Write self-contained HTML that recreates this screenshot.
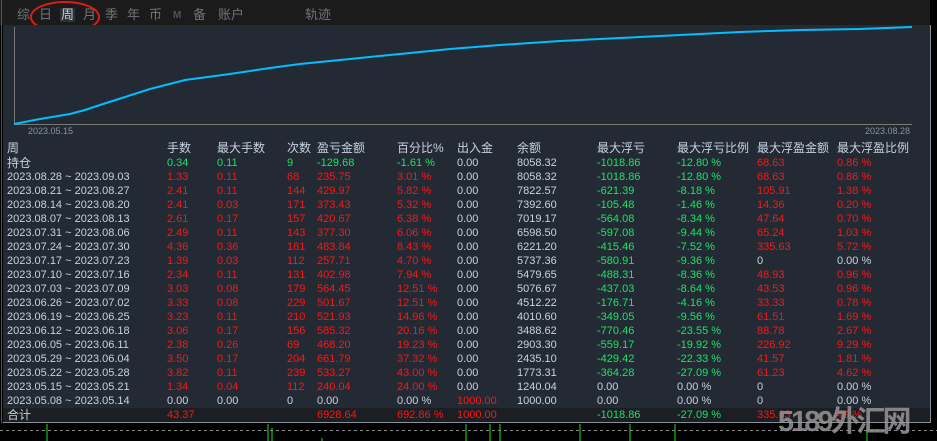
<!DOCTYPE html>
<html><head><meta charset="utf-8"><style>
*{margin:0;padding:0;box-sizing:border-box}
body{width:937px;height:441px;background:#000;position:relative;overflow:hidden;font-family:"Liberation Sans","Noto Sans CJK SC",sans-serif}
#top{position:absolute;left:0;top:0;width:930px;height:25px;background:#1b1b1b}
.tab{position:absolute;top:8px;font-size:13px;color:#6f747a;line-height:14px}
#panel{position:absolute;left:3px;top:25px;width:928px;height:398px;background:#232a33;border-right:1px solid #8a9099;border-bottom:1px solid #8a9099}
#lb{position:absolute;left:1px;top:0;width:1px;height:423px;background:#555}
.r{position:absolute;left:0;width:925px;height:14px;font-size:11px;line-height:14px;color:#c9d2e2}
.r span{position:absolute;top:0;white-space:nowrap}
.h{font-size:12px}
.R{color:#ff1515}.G{color:#14e865}
</style></head><body>
<div id="top">
<span class="tab" style="left:17px">综</span>
<span class="tab" style="left:39px">日</span>
<span class="tab" style="left:60px;background:#2a3038;color:#c8ccd2;padding:0 1px">周</span>
<span class="tab" style="left:83px">月</span>
<span class="tab" style="left:105px">季</span>
<span class="tab" style="left:127px">年</span>
<span class="tab" style="left:149px">币</span>
<span class="tab" style="left:173px;font-size:10px;font-weight:bold;top:9px;color:#4a5560">M</span>
<span class="tab" style="left:193px">备</span>
<span class="tab" style="left:218px">账户</span>
<span class="tab" style="left:305px">轨迹</span>
<svg style="position:absolute;left:30px;top:1px" width="74" height="33"><ellipse cx="35" cy="16" rx="34" ry="15" fill="none" stroke="#e01a1a" stroke-width="2"/></svg>
</div>
<div id="panel"></div>
<div id="lb"></div>
<svg style="position:absolute;left:0;top:0" width="937" height="441">
<line x1="14.5" y1="27" x2="14.5" y2="124" stroke="#777" />
<line x1="14" y1="124.5" x2="912" y2="124.5" stroke="#777"/>
<polyline fill="none" stroke="#00bfff" stroke-width="2" points="14,124 40,119 70,114 85,110 100,105 125,97 150,89 185,80 230,74 270,68 300,64 350,59 400,54 450,49 500,45 560,41 620,38 680,35 740,32 800,30 860,29 912,27"/>
<text x="28" y="134" font-size="9" fill="#8a929c" font-family="Liberation Sans">2023.05.15</text>
<text x="865" y="134" font-size="9" fill="#8a929c" font-family="Liberation Sans">2023.08.28</text>
<line x1="0" y1="430.5" x2="937" y2="430.5" stroke="#888" stroke-dasharray="3,3"/>
<g stroke="#22dd22"><line x1="47" y1="424" x2="47" y2="441"/><line x1="268" y1="424" x2="268" y2="441"/><line x1="272" y1="428" x2="272" y2="441"/><line x1="322" y1="438" x2="322" y2="441"/><line x1="466" y1="424" x2="466" y2="441"/><line x1="490" y1="424" x2="490" y2="441"/><line x1="500" y1="424" x2="500" y2="441"/><line x1="580" y1="424" x2="580" y2="441"/><line x1="630" y1="424" x2="630" y2="441"/><line x1="675" y1="424" x2="675" y2="441"/><line x1="867" y1="424" x2="867" y2="441"/></g>
<rect x="3" y="408" width="927" height="14" fill="#1b1e22"/>
</svg>

<div class="r h" style="top:141px"><span style="left:7px">周</span><span style="left:167px">手数</span><span style="left:217px">最大手数</span><span style="left:287px">次数</span><span style="left:317px">盈亏金额</span><span style="left:397px">百分比%</span><span style="left:457px">出入金</span><span style="left:517px">余额</span><span style="left:597px">最大浮亏</span><span style="left:677px">最大浮亏比例</span><span style="left:757px">最大浮盈金额</span><span style="left:837px">最大浮盈比例</span></div>
<div class="r" style="top:156px"><span class="h" style="left:7px">持仓</span><span class="G" style="left:167px">0.34</span><span class="G" style="left:217px">0.11</span><span class="G" style="left:287px">9</span><span class="G" style="left:317px">-129.68</span><span class="G" style="left:397px">-1.61 %</span><span style="left:457px">0.00</span><span style="left:517px">8058.32</span><span class="G" style="left:597px">-1018.86</span><span class="G" style="left:677px">-12.80 %</span><span class="R" style="left:757px">68.63</span><span class="R" style="left:837px">0.86 %</span></div>
<div class="r" style="top:170px"><span style="left:7px">2023.08.28 ~ 2023.09.03</span><span class="R" style="left:167px">1.33</span><span class="R" style="left:217px">0.11</span><span class="R" style="left:287px">68</span><span class="R" style="left:317px">235.75</span><span class="R" style="left:397px">3.01 %</span><span style="left:457px">0.00</span><span style="left:517px">8058.32</span><span class="G" style="left:597px">-1018.86</span><span class="G" style="left:677px">-12.80 %</span><span class="R" style="left:757px">68.63</span><span class="R" style="left:837px">0.86 %</span></div>
<div class="r" style="top:184px"><span style="left:7px">2023.08.21 ~ 2023.08.27</span><span class="R" style="left:167px">2.41</span><span class="R" style="left:217px">0.11</span><span class="R" style="left:287px">144</span><span class="R" style="left:317px">429.97</span><span class="R" style="left:397px">5.82 %</span><span style="left:457px">0.00</span><span style="left:517px">7822.57</span><span class="G" style="left:597px">-621.39</span><span class="G" style="left:677px">-8.18 %</span><span class="R" style="left:757px">105.91</span><span class="R" style="left:837px">1.38 %</span></div>
<div class="r" style="top:198px"><span style="left:7px">2023.08.14 ~ 2023.08.20</span><span class="R" style="left:167px">2.41</span><span class="R" style="left:217px">0.03</span><span class="R" style="left:287px">171</span><span class="R" style="left:317px">373.43</span><span class="R" style="left:397px">5.32 %</span><span style="left:457px">0.00</span><span style="left:517px">7392.60</span><span class="G" style="left:597px">-105.48</span><span class="G" style="left:677px">-1.46 %</span><span class="R" style="left:757px">14.36</span><span class="R" style="left:837px">0.20 %</span></div>
<div class="r" style="top:212px"><span style="left:7px">2023.08.07 ~ 2023.08.13</span><span class="R" style="left:167px">2.61</span><span class="R" style="left:217px">0.17</span><span class="R" style="left:287px">157</span><span class="R" style="left:317px">420.67</span><span class="R" style="left:397px">6.38 %</span><span style="left:457px">0.00</span><span style="left:517px">7019.17</span><span class="G" style="left:597px">-564.08</span><span class="G" style="left:677px">-8.34 %</span><span class="R" style="left:757px">47.64</span><span class="R" style="left:837px">0.70 %</span></div>
<div class="r" style="top:226px"><span style="left:7px">2023.07.31 ~ 2023.08.06</span><span class="R" style="left:167px">2.49</span><span class="R" style="left:217px">0.11</span><span class="R" style="left:287px">143</span><span class="R" style="left:317px">377.30</span><span class="R" style="left:397px">6.06 %</span><span style="left:457px">0.00</span><span style="left:517px">6598.50</span><span class="G" style="left:597px">-597.08</span><span class="G" style="left:677px">-9.44 %</span><span class="R" style="left:757px">65.24</span><span class="R" style="left:837px">1.03 %</span></div>
<div class="r" style="top:240px"><span style="left:7px">2023.07.24 ~ 2023.07.30</span><span class="R" style="left:167px">4.36</span><span class="R" style="left:217px">0.36</span><span class="R" style="left:287px">181</span><span class="R" style="left:317px">483.84</span><span class="R" style="left:397px">8.43 %</span><span style="left:457px">0.00</span><span style="left:517px">6221.20</span><span class="G" style="left:597px">-415.46</span><span class="G" style="left:677px">-7.52 %</span><span class="R" style="left:757px">335.63</span><span class="R" style="left:837px">5.72 %</span></div>
<div class="r" style="top:254px"><span style="left:7px">2023.07.17 ~ 2023.07.23</span><span class="R" style="left:167px">1.39</span><span class="R" style="left:217px">0.03</span><span class="R" style="left:287px">112</span><span class="R" style="left:317px">257.71</span><span class="R" style="left:397px">4.70 %</span><span style="left:457px">0.00</span><span style="left:517px">5737.36</span><span class="G" style="left:597px">-580.91</span><span class="G" style="left:677px">-9.36 %</span><span style="left:757px">0</span><span style="left:837px">0.00 %</span></div>
<div class="r" style="top:268px"><span style="left:7px">2023.07.10 ~ 2023.07.16</span><span class="R" style="left:167px">2.34</span><span class="R" style="left:217px">0.11</span><span class="R" style="left:287px">131</span><span class="R" style="left:317px">402.98</span><span class="R" style="left:397px">7.94 %</span><span style="left:457px">0.00</span><span style="left:517px">5479.65</span><span class="G" style="left:597px">-488.31</span><span class="G" style="left:677px">-8.36 %</span><span class="R" style="left:757px">48.93</span><span class="R" style="left:837px">0.96 %</span></div>
<div class="r" style="top:282px"><span style="left:7px">2023.07.03 ~ 2023.07.09</span><span class="R" style="left:167px">3.03</span><span class="R" style="left:217px">0.08</span><span class="R" style="left:287px">179</span><span class="R" style="left:317px">564.45</span><span class="R" style="left:397px">12.51 %</span><span style="left:457px">0.00</span><span style="left:517px">5076.67</span><span class="G" style="left:597px">-437.03</span><span class="G" style="left:677px">-8.64 %</span><span class="R" style="left:757px">43.53</span><span class="R" style="left:837px">0.96 %</span></div>
<div class="r" style="top:296px"><span style="left:7px">2023.06.26 ~ 2023.07.02</span><span class="R" style="left:167px">3.33</span><span class="R" style="left:217px">0.08</span><span class="R" style="left:287px">229</span><span class="R" style="left:317px">501.67</span><span class="R" style="left:397px">12.51 %</span><span style="left:457px">0.00</span><span style="left:517px">4512.22</span><span class="G" style="left:597px">-176.71</span><span class="G" style="left:677px">-4.16 %</span><span class="R" style="left:757px">33.33</span><span class="R" style="left:837px">0.78 %</span></div>
<div class="r" style="top:310px"><span style="left:7px">2023.06.19 ~ 2023.06.25</span><span class="R" style="left:167px">3.23</span><span class="R" style="left:217px">0.11</span><span class="R" style="left:287px">210</span><span class="R" style="left:317px">521.93</span><span class="R" style="left:397px">14.96 %</span><span style="left:457px">0.00</span><span style="left:517px">4010.60</span><span class="G" style="left:597px">-349.05</span><span class="G" style="left:677px">-9.56 %</span><span class="R" style="left:757px">61.51</span><span class="R" style="left:837px">1.69 %</span></div>
<div class="r" style="top:324px"><span style="left:7px">2023.06.12 ~ 2023.06.18</span><span class="R" style="left:167px">3.06</span><span class="R" style="left:217px">0.17</span><span class="R" style="left:287px">156</span><span class="R" style="left:317px">585.32</span><span class="R" style="left:397px">20.16 %</span><span style="left:457px">0.00</span><span style="left:517px">3488.62</span><span class="G" style="left:597px">-770.46</span><span class="G" style="left:677px">-23.55 %</span><span class="R" style="left:757px">88.78</span><span class="R" style="left:837px">2.67 %</span></div>
<div class="r" style="top:338px"><span style="left:7px">2023.06.05 ~ 2023.06.11</span><span class="R" style="left:167px">2.38</span><span class="R" style="left:217px">0.26</span><span class="R" style="left:287px">69</span><span class="R" style="left:317px">468.20</span><span class="R" style="left:397px">19.23 %</span><span style="left:457px">0.00</span><span style="left:517px">2903.30</span><span class="G" style="left:597px">-559.17</span><span class="G" style="left:677px">-19.92 %</span><span class="R" style="left:757px">226.92</span><span class="R" style="left:837px">9.29 %</span></div>
<div class="r" style="top:352px"><span style="left:7px">2023.05.29 ~ 2023.06.04</span><span class="R" style="left:167px">3.50</span><span class="R" style="left:217px">0.17</span><span class="R" style="left:287px">204</span><span class="R" style="left:317px">661.79</span><span class="R" style="left:397px">37.32 %</span><span style="left:457px">0.00</span><span style="left:517px">2435.10</span><span class="G" style="left:597px">-429.42</span><span class="G" style="left:677px">-22.33 %</span><span class="R" style="left:757px">41.57</span><span class="R" style="left:837px">1.81 %</span></div>
<div class="r" style="top:366px"><span style="left:7px">2023.05.22 ~ 2023.05.28</span><span class="R" style="left:167px">3.82</span><span class="R" style="left:217px">0.11</span><span class="R" style="left:287px">239</span><span class="R" style="left:317px">533.27</span><span class="R" style="left:397px">43.00 %</span><span style="left:457px">0.00</span><span style="left:517px">1773.31</span><span class="G" style="left:597px">-364.28</span><span class="G" style="left:677px">-27.09 %</span><span class="R" style="left:757px">61.23</span><span class="R" style="left:837px">4.62 %</span></div>
<div class="r" style="top:380px"><span style="left:7px">2023.05.15 ~ 2023.05.21</span><span class="R" style="left:167px">1.34</span><span class="R" style="left:217px">0.04</span><span class="R" style="left:287px">112</span><span class="R" style="left:317px">240.04</span><span class="R" style="left:397px">24.00 %</span><span style="left:457px">0.00</span><span style="left:517px">1240.04</span><span style="left:597px">0.00</span><span style="left:677px">0.00 %</span><span style="left:757px">0</span><span style="left:837px">0.00 %</span></div>
<div class="r" style="top:394px"><span style="left:7px">2023.05.08 ~ 2023.05.14</span><span style="left:167px">0.00</span><span style="left:217px">0.00</span><span style="left:287px">0</span><span style="left:317px">0.00</span><span style="left:397px">0.00 %</span><span class="R" style="left:457px">1000.00</span><span style="left:517px">1000.00</span><span style="left:597px">0.00</span><span style="left:677px">0.00 %</span><span style="left:757px">0</span><span style="left:837px">0.00 %</span></div>
<div class="r" style="top:408px"><span class="h" style="left:7px">合计</span><span class="R" style="left:167px">43.37</span><span class="R" style="left:317px">6928.64</span><span class="R" style="left:397px">692.86 %</span><span class="R" style="left:457px">1000.00</span><span class="G" style="left:597px">-1018.86</span><span class="G" style="left:677px">-27.09 %</span><span class="R" style="left:757px">335.63</span><span class="R" style="left:837px">49 %</span></div>
<div style="position:absolute;left:778px;top:405px;white-space:nowrap;font-size:29px;line-height:34px;font-weight:bold;color:rgba(150,150,150,0.85);letter-spacing:-3px">5189外汇网</div>
</body></html>
